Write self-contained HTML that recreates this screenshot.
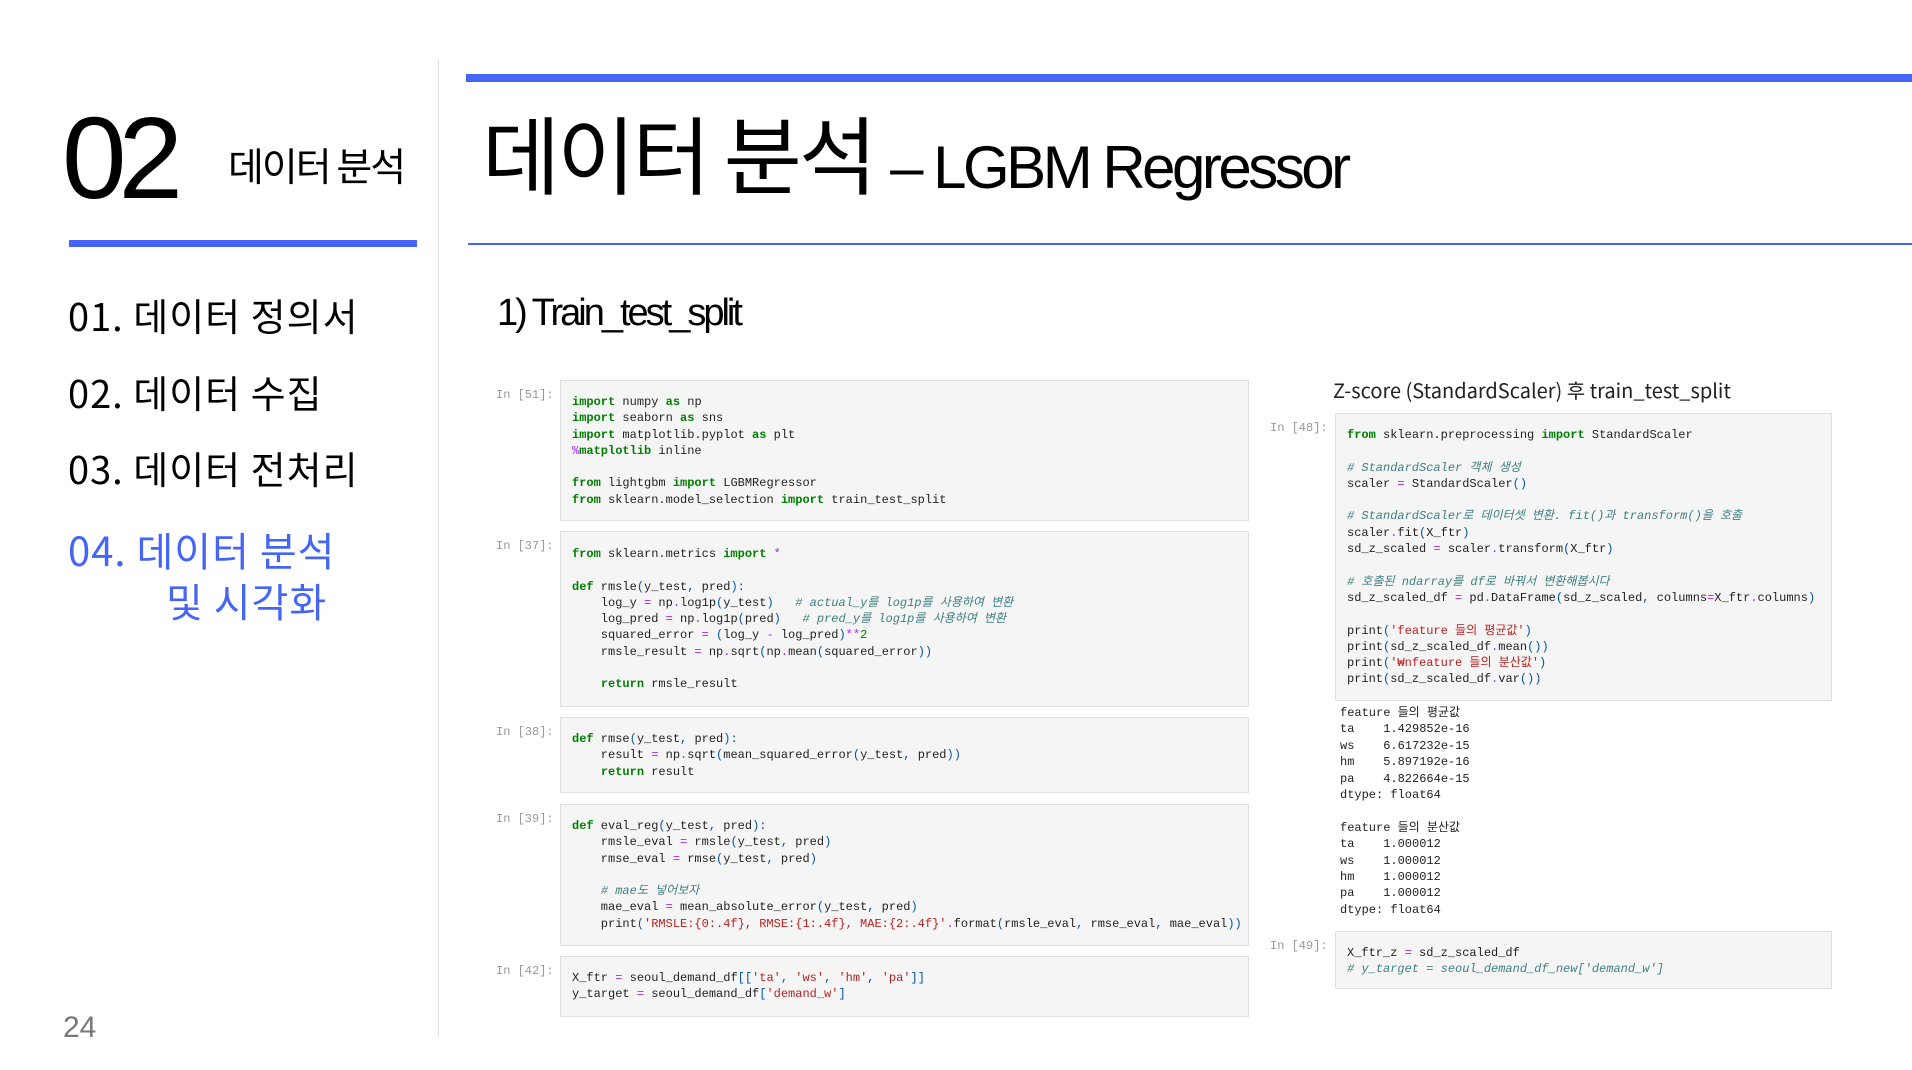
<!DOCTYPE html>
<html><head><meta charset="utf-8"><style>
*{margin:0;padding:0;box-sizing:border-box}
body{width:1912px;height:1070px;background:#fff;position:relative;overflow:hidden;font-family:"Liberation Sans","Noto Sans CJK KR",sans-serif;color:#000}
.a{position:absolute;white-space:nowrap}
.k{font-family:"Noto Sans CJK KR","Liberation Sans",sans-serif}
.box{position:absolute;background:#f5f5f5;border:1px solid #e0e0e0}
pre{font-family:"Liberation Mono","Noto Sans CJK KR",monospace;font-size:12px;line-height:16.3px;color:#222;white-space:pre}
.p{position:absolute;font-family:"Liberation Mono",monospace;font-size:12px;color:#999}
.kw{color:#008000;font-weight:bold}.o{color:#aa22ff}.c{color:#408080;font-style:italic}.s{color:#ba2121}.b{color:#0055aa}.n{color:#008000}
.m{font-size:38px;line-height:50px;letter-spacing:1px}
</style></head><body>
<div class="a" style="left:466px;top:74px;width:1446px;height:8px;background:#4565f7"></div>
<div class="a" style="left:468px;top:243px;width:1444px;height:2px;background:#4565f7"></div>
<div class="a" style="left:438px;top:59px;width:1px;height:977px;background:#ddd"></div>
<div class="a" style="left:69px;top:240px;width:348px;height:7px;background:#4565f7"></div>

<div class="a" style="left:62px;top:100px;font-size:116px;line-height:116px;letter-spacing:-8px">02</div>
<div class="a k" style="left:228px;top:142px;font-size:39px;line-height:46px;letter-spacing:-2px">데이터 분석</div>
<div class="a k" style="left:482px;top:100px;font-size:85px;line-height:104px;letter-spacing:-3px">데이터 분석 <span style="font-family:'Liberation Sans',sans-serif;font-size:60px;letter-spacing:-3.5px">– LGBM Regressor</span></div>

<div class="a k m" style="left:68px;top:290px">01. 데이터 정의서</div>
<div class="a k m" style="left:68px;top:367px">02. 데이터 수집</div>
<div class="a k m" style="left:68px;top:443px">03. 데이터 전처리</div>
<div class="a k m" style="left:68px;top:524px;font-size:40px;color:#4565f7">04. 데이터 분석</div>
<div class="a k m" style="left:166px;top:575px;font-size:40px;color:#4565f7">및 시각화</div>
<div class="a" style="left:63px;top:1008px;font-size:30px;line-height:40px;color:#777">24</div>

<div class="a" style="left:497px;top:290px;font-size:38px;line-height:46px;letter-spacing:-3px">1) Train_test_split</div>
<div class="a k" style="left:1333px;top:376px;font-size:20px;line-height:28px;color:#222">Z-score (StandardScaler) 후 train_test_split</div>

<div class="p" style="left:496px;top:388px">In [51]:</div>
<div class="box" style="left:560px;top:380px;width:689px;height:141px;padding:13px 0 0 11px"><pre><span class="kw">import</span> numpy <span class="kw">as</span> np
<span class="kw">import</span> seaborn <span class="kw">as</span> sns
<span class="kw">import</span> matplotlib.pyplot <span class="kw">as</span> plt
<span class="o">%</span><span class="kw">matplotlib</span> inline

<span class="kw">from</span> lightgbm <span class="kw">import</span> LGBMRegressor
<span class="kw">from</span> sklearn.model_selection <span class="kw">import</span> train_test_split</pre></div>

<div class="p" style="left:496px;top:539px">In [37]:</div>
<div class="box" style="left:560px;top:531px;width:689px;height:176px;padding:14px 0 0 11px"><pre><span class="kw">from</span> sklearn.metrics <span class="kw">import</span> <span class="o">*</span>

<span class="kw">def</span> rmsle<span class="b">(</span>y_test<span class="b">,</span> pred<span class="b">):</span>
    log_y <span class="o">=</span> np<span class="o">.</span>log1p<span class="b">(</span>y_test<span class="b">)</span>   <span class="c"># actual_y를 log1p를 사용하여 변환</span>
    log_pred <span class="o">=</span> np<span class="o">.</span>log1p<span class="b">(</span>pred<span class="b">)</span>   <span class="c"># pred_y를 log1p를 사용하여 변환</span>
    squared_error <span class="o">=</span> <span class="b">(</span>log_y <span class="o">-</span> log_pred<span class="b">)</span><span class="o">**</span><span class="n">2</span>
    rmsle_result <span class="o">=</span> np<span class="o">.</span>sqrt<span class="b">(</span>np<span class="o">.</span>mean<span class="b">(</span>squared_error<span class="b">))</span>

    <span class="kw">return</span> rmsle_result</pre></div>

<div class="p" style="left:496px;top:725px">In [38]:</div>
<div class="box" style="left:560px;top:717px;width:689px;height:76px;padding:13px 0 0 11px"><pre><span class="kw">def</span> rmse<span class="b">(</span>y_test<span class="b">,</span> pred<span class="b">):</span>
    result <span class="o">=</span> np<span class="o">.</span>sqrt<span class="b">(</span>mean_squared_error<span class="b">(</span>y_test<span class="b">,</span> pred<span class="b">))</span>
    <span class="kw">return</span> result</pre></div>

<div class="p" style="left:496px;top:812px">In [39]:</div>
<div class="box" style="left:560px;top:804px;width:689px;height:142px;padding:13px 0 0 11px"><pre><span class="kw">def</span> eval_reg<span class="b">(</span>y_test<span class="b">,</span> pred<span class="b">):</span>
    rmsle_eval <span class="o">=</span> rmsle<span class="b">(</span>y_test<span class="b">,</span> pred<span class="b">)</span>
    rmse_eval <span class="o">=</span> rmse<span class="b">(</span>y_test<span class="b">,</span> pred<span class="b">)</span>

    <span class="c"># mae도 넣어보자</span>
    mae_eval <span class="o">=</span> mean_absolute_error<span class="b">(</span>y_test<span class="b">,</span> pred<span class="b">)</span>
    print<span class="b">(</span><span class="s">'RMSLE:{0:.4f}, RMSE:{1:.4f}, MAE:{2:.4f}'</span><span class="o">.</span>format<span class="b">(</span>rmsle_eval<span class="b">,</span> rmse_eval<span class="b">,</span> mae_eval<span class="b">))</span></pre></div>

<div class="p" style="left:496px;top:964px">In [42]:</div>
<div class="box" style="left:560px;top:956px;width:689px;height:61px;padding:13px 0 0 11px"><pre>X_ftr <span class="o">=</span> seoul_demand_df<span class="b">[[</span><span class="s">'ta'</span><span class="b">,</span> <span class="s">'ws'</span><span class="b">,</span> <span class="s">'hm'</span><span class="b">,</span> <span class="s">'pa'</span><span class="b">]]</span>
y_target <span class="o">=</span> seoul_demand_df<span class="b">[</span><span class="s">'demand_w'</span><span class="b">]</span></pre></div>

<div class="p" style="left:1270px;top:421px">In [48]:</div>
<div class="box" style="left:1335px;top:413px;width:497px;height:288px;padding:13px 0 0 11px"><pre><span class="kw">from</span> sklearn.preprocessing <span class="kw">import</span> StandardScaler

<span class="c"># StandardScaler 객체 생성</span>
scaler <span class="o">=</span> StandardScaler<span class="b">()</span>

<span class="c"># StandardScaler로 데이터셋 변환. fit()과 transform()을 호출</span>
scaler<span class="o">.</span>fit<span class="b">(</span>X_ftr<span class="b">)</span>
sd_z_scaled <span class="o">=</span> scaler<span class="o">.</span>transform<span class="b">(</span>X_ftr<span class="b">)</span>

<span class="c"># 호출된 ndarray를 df로 바꿔서 변환해봅시다</span>
sd_z_scaled_df <span class="o">=</span> pd<span class="o">.</span>DataFrame<span class="b">(</span>sd_z_scaled<span class="b">,</span> columns<span class="o">=</span>X_ftr<span class="o">.</span>columns<span class="b">)</span>

print<span class="b">(</span><span class="s">'feature 들의 평균값'</span><span class="b">)</span>
print<span class="b">(</span>sd_z_scaled_df<span class="o">.</span>mean<span class="b">())</span>
print<span class="b">(</span><span class="s">'₩nfeature 들의 분산값'</span><span class="b">)</span>
print<span class="b">(</span>sd_z_scaled_df<span class="o">.</span>var<span class="b">())</span></pre></div>
<pre style="position:absolute;left:1340px;top:705px;line-height:16.4px">feature 들의 평균값
ta    1.429852e-16
ws    6.617232e-15
hm    5.897192e-16
pa    4.822664e-15
dtype: float64

feature 들의 분산값
ta    1.000012
ws    1.000012
hm    1.000012
pa    1.000012
dtype: float64</pre>

<div class="p" style="left:1270px;top:939px">In [49]:</div>
<div class="box" style="left:1335px;top:931px;width:497px;height:58px;padding:13px 0 0 11px"><pre>X_ftr_z <span class="o">=</span> sd_z_scaled_df
<span class="c"># y_target = seoul_demand_df_new['demand_w']</span></pre></div>
</body></html>
